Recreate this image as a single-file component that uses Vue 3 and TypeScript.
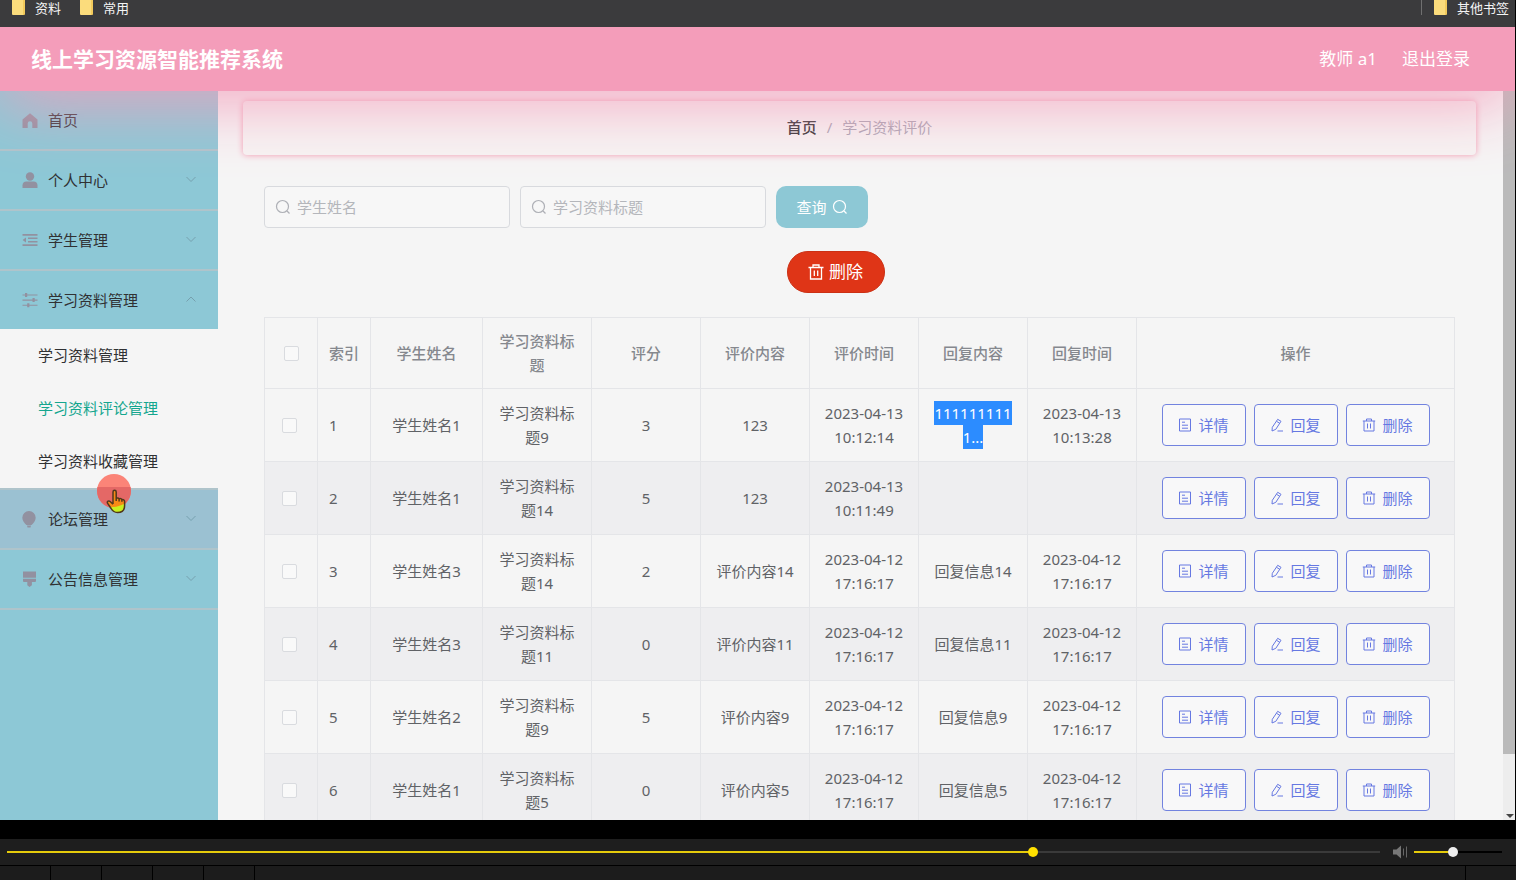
<script setup lang="ts">
import { ref } from 'vue'

interface Review {
  id: number
  student: string
  title: string
  score: number
  content: string
  time: string[]
  reply: string
  replyTime: string[]
  selected?: boolean
}

interface MenuItem {
  label: string
  icon: 'home' | 'user' | 'list' | 'sliders' | 'bulb' | 'brush'
  arrow?: 'down' | 'up'
  tinted?: boolean
  children?: string[]
}

const menu: MenuItem[] = [
  { label: '首页', icon: 'home' },
  { label: '个人中心', icon: 'user', arrow: 'down' },
  { label: '学生管理', icon: 'list', arrow: 'down' },
  {
    label: '学习资料管理',
    icon: 'sliders',
    arrow: 'up',
    children: ['学习资料管理', '学习资料评论管理', '学习资料收藏管理'],
  },
  { label: '论坛管理', icon: 'bulb', arrow: 'down', tinted: true },
  { label: '公告信息管理', icon: 'brush', arrow: 'down' },
]
const activeChild = '学习资料评论管理'

const headers = ['学生姓名', '学习资料标题', '评分', '评价内容', '评价时间', '回复内容', '回复时间', '操作']

const seeded = ['2023-04-12', '17:16:17']
const rows: Review[] = [
  { id: 1, student: '学生姓名1', title: '学习资料标题9', score: 3, content: '123', time: ['2023-04-13', '10:12:14'], reply: '1111111111...', replyTime: ['2023-04-13', '10:13:28'], selected: true },
  { id: 2, student: '学生姓名1', title: '学习资料标题14', score: 5, content: '123', time: ['2023-04-13', '10:11:49'], reply: '', replyTime: [] },
  { id: 3, student: '学生姓名3', title: '学习资料标题14', score: 2, content: '评价内容14', time: seeded, reply: '回复信息14', replyTime: seeded },
  { id: 4, student: '学生姓名3', title: '学习资料标题11', score: 0, content: '评价内容11', time: seeded, reply: '回复信息11', replyTime: seeded },
  { id: 5, student: '学生姓名2', title: '学习资料标题9', score: 5, content: '评价内容9', time: seeded, reply: '回复信息9', replyTime: seeded },
  { id: 6, student: '学生姓名1', title: '学习资料标题5', score: 0, content: '评价内容5', time: seeded, reply: '回复信息5', replyTime: seeded },
]

const studentName = ref('')
const materialTitle = ref('')
const progress = ref(749)
const volume = ref(44)
</script>

<template>
  <div class="screen">
    <nav class="bookmarks" aria-label="书签">
      <a href="#" class="bookmark"><span class="folder"></span>资料</a>
      <a href="#" class="bookmark"><span class="folder"></span>常用</a>
      <span class="divider"></span>
      <a href="#" class="bookmark"><span class="folder"></span>其他书签</a>
    </nav>

    <div class="site">
      <header class="topbar">
        <h1>线上学习资源智能推荐系统</h1>
        <span class="who">教师 a1</span>
        <a href="#" class="logout">退出登录</a>
      </header>

      <div class="body">
        <aside class="sidebar">
          <ul class="menu">
            <li v-for="item in menu" :key="item.label" class="menu-group">
              <button type="button" class="menu-item" :class="{ tinted: item.tinted }">
                <svg class="menu-icon" viewBox="0 0 16 16" aria-hidden="true">
                  <path v-if="item.icon === 'home'" d="M8 1.200 15.500 7.500V16H10.300V11.500a2.300 2.300 0 0 0-4.600 0V16H.5V7.500z" />
                  <template v-else-if="item.icon === 'user'">
                    <circle cx="8" cy="4.500" r="4.200" />
                    <path d="M.5 16v-2.500c0-2.500 1.600-3.900 3.800-3.900h7.400c2.200 0 3.800 1.400 3.800 3.900V16z" />
                  </template>
                  <template v-else-if="item.icon === 'list'">
                    <path d="M.5 2h15v1.700H.5zM6 5.400h9.500v1.500H6zM6 9h9.500v1.500H6zM.5 12.300h15V14H.5zM4 5.400v5L.6 7.900z" />
                  </template>
                  <template v-else-if="item.icon === 'sliders'">
                    <path d="M.5 2.500h15v1.100H.5zM.5 7.600h15v1.100H.5zM.5 12.700h15v1.100H.5z" />
                    <path d="M3 1h2.200v4H3zM10.500 6.100h2.200v4h-2.200zM5.200 11.200h2.200v4H5.200z" />
                  </template>
                  <path v-else-if="item.icon === 'bulb'" d="M7 0a6.700 6.700 0 0 1 6.700 6.700c0 3-2.100 5.300-4.100 7.200H4.400C2.400 12 .3 9.700.3 6.700A6.700 6.700 0 0 1 7 0zM5 14.600h4L8.500 16.500h-3z" />
                  <path v-else d="M1 .5h13v6.200H1zM1 7.700h13v2.100c0 .8-.5 1.200-1.200 1.200H9.900v3.200L7.500 16l-2.200-1.800V11H2.200C1.500 11 1 10.600 1 9.800z" />
                </svg>
                <span class="menu-label">{{ item.label }}</span>
                <svg v-if="item.arrow" class="arrow" viewBox="0 0 10 10" aria-hidden="true">
                  <path :d="item.arrow === 'down' ? 'M.5 2 5 6.500 9.500 2' : 'M.5 6.500 5 2 9.500 6.500'" />
                </svg>
              </button>
              <ul v-if="item.children" class="submenu">
                <li v-for="child in item.children" :key="child">
                  <a href="#" :class="{ active: child === activeChild }">{{ child }}</a>
                </li>
              </ul>
            </li>
          </ul>
          <div class="pointer">
            <svg viewBox="0 0 36 42" aria-hidden="true">
              <circle cx="18" cy="18" r="17" fill="#fb8478" />
              <path d="M1.500 14h33a17 17 0 0 1 .500 4 17 17 0 0 1-34 0 17 17 0 0 1 .5-4z" fill="#e46866" />
              <path d="M17 19c0-2.200 3.200-2.200 3.200 0v6.500c.8-1 2.600-.7 2.900.5.900-.8 2.500-.4 2.800.8 1.200-.6 2.700.2 2.700 1.700v4.300c0 4.200-2.800 6.700-7 6.700-3.200 0-5-1.400-6.500-4l-3.600-5.300c-.8-1.900 1.300-2.900 2.600-1.700l2.900 2.600z" fill="#f88a16" />
              <path d="M14 33.500c5 1.500 9-.5 14.500-2.800v2.100c0 4.200-2.800 6.700-7 6.700-3.200 0-5-1.400-6.500-4z" fill="#c8f020" />
              <path d="M17 31V19c0-2.200 3.200-2.200 3.200 0v9m0-2.500c.8-1 2.600-.7 2.900.5v2.500m0-2.500c.9-.8 2.500-.4 2.800.8v2m0-2c1.200-.6 2.700.2 2.700 1.700v4.300c0 4.200-2.800 6.700-7 6.700-3.200 0-5-1.400-6.500-4l-3.600-5.300c-.8-1.900 1.300-2.900 2.600-1.700l2.900 2.600" fill="none" stroke="#50381c" stroke-width="1.500" />
            </svg>
          </div>
        </aside>

        <main class="content">
          <nav class="crumbs" aria-label="面包屑">
            <a href="#">首页</a>
            <span class="slash">/</span>
            <span class="current">学习资料评价</span>
          </nav>

          <section class="panel">
            <form class="search" @submit.prevent>
              <label class="field">
                <svg class="lens" viewBox="0 0 16 16" aria-hidden="true"><circle cx="7.500" cy="7.500" r="6" /><path d="m12 12 2.500 2.500" /></svg>
                <input v-model="studentName" type="text" placeholder="学生姓名" aria-label="学生姓名" />
              </label>
              <label class="field">
                <svg class="lens" viewBox="0 0 16 16" aria-hidden="true"><circle cx="7.500" cy="7.500" r="6" /><path d="m12 12 2.500 2.500" /></svg>
                <input v-model="materialTitle" type="text" placeholder="学习资料标题" aria-label="学习资料标题" />
              </label>
              <button type="submit" class="query">
                查询
                <svg class="lens" viewBox="0 0 16 16" aria-hidden="true"><circle cx="7.500" cy="7.500" r="6" /><path d="m12 12 2.500 2.500" /></svg>
              </button>
            </form>

            <div class="bulk">
              <button type="button" class="remove">
                <svg viewBox="0 0 16 16" aria-hidden="true"><path d="M.5 3.500h15M5 3.500V1h6v2.500M2.500 3.500v11.500h11V3.500M6.300 6.500v5.500M9.700 6.500v5.500" /></svg>
                删除
              </button>
            </div>

            <table class="grid">
              <colgroup>
                <col class="c-check" />
                <col class="c-index" />
                <col class="c-name" />
                <col v-for="n in 6" :key="n" class="c-data" />
                <col class="c-actions" />
              </colgroup>
              <thead>
                <tr>
                  <th><input type="checkbox" aria-label="全选" /></th>
                  <th class="index">索引</th>
                  <th v-for="h in headers" :key="h">{{ h }}</th>
                </tr>
              </thead>
              <tbody>
                <tr v-for="row in rows" :key="row.id">
                  <td class="check"><input type="checkbox" :aria-label="`选择第${row.id}行`" /></td>
                  <td class="index">{{ row.id }}</td>
                  <td>{{ row.student }}</td>
                  <td>{{ row.title }}</td>
                  <td>{{ row.score }}</td>
                  <td>{{ row.content }}</td>
                  <td class="time"><div v-for="part in row.time" :key="part">{{ part }}</div></td>
                  <td><span :class="{ selected: row.selected }">{{ row.reply }}</span></td>
                  <td class="time"><div v-for="part in row.replyTime" :key="part">{{ part }}</div></td>
                  <td class="ops">
                    <div class="actions">
                      <button type="button">
                        <svg viewBox="0 0 14 14" aria-hidden="true"><path d="M1.500 1h11v12h-11zM4 4.200h3M4 7.200h6M4 10.200h6" /></svg>详情
                      </button>
                      <button type="button">
                        <svg viewBox="0 0 14 14" aria-hidden="true"><path d="M7.700 1.300 11 3.300 5.800 11.300 2 13l.3-3.700zM6.500 3.300l3.200 2M7.500 13H13" /></svg>回复
                      </button>
                      <button type="button">
                        <svg viewBox="0 0 14 14" aria-hidden="true"><path d="M.8 3h12.400M4.500 3V1h5v2M2 3v10h10V3M5.500 5.500v5M8.500 5.500v5" /></svg>删除
                      </button>
                    </div>
                  </td>
                </tr>
              </tbody>
            </table>
          </section>
        </main>

        <div class="scrollbar" aria-hidden="true">
          <div class="thumb"></div>
          <div class="down"></div>
        </div>
      </div>
    </div>

    <footer class="player">
      <input v-model.number="progress" class="seek" type="range" min="0" max="1000" aria-label="播放进度" :style="{ '--fill': progress / 10 + '%' }" />
      <button type="button" class="mute" aria-label="静音">
        <svg viewBox="0 0 16 14" aria-hidden="true">
          <path d="M1 4.500h3.500L9 .5v13L4.500 9.500H1z" fill="#777" />
          <path d="M11.500 3.500v7M14.500 1.500v11" stroke="#666" fill="none" />
        </svg>
      </button>
      <input v-model.number="volume" class="volume" type="range" min="0" max="100" aria-label="音量" :style="{ '--fill': volume + '%' }" />
    </footer>
    <div class="tray">
      <span v-for="n in 5" :key="n" class="slot"></span>
      <span class="slot wide"></span>
      <span class="slot"></span>
    </div>
  </div>
</template>

<style>
body {
  background: #000;
  overflow: hidden;
}
</style>

<style scoped>
* {
  box-sizing: border-box;
}
.screen {
  display: flex;
  flex-direction: column;
  height: 100vh;
  background: #000;
  color: #606266;
  font: 15px/24px 'Noto Sans', 'Noto Sans CJK SC', sans-serif;
}
button,
input {
  font: inherit;
  color: inherit;
}
button {
  cursor: pointer;
}
a {
  color: inherit;
  text-decoration: none;
}
svg {
  display: block;
  flex: none;
}
ul {
  list-style: none;
  margin: 0;
  padding: 0;
}

/* bookmarks bar */
.bookmarks {
  display: flex;
  align-items: center;
  flex: none;
  height: 27px;
  margin-right: 1px;
  padding: 0 6px 12px 12px;
  background: #3b3b3d;
  color: #f4f4f4;
  font-size: 13px;
  line-height: 16px;
}
.bookmark {
  display: flex;
  align-items: center;
  gap: 10px;
  margin-right: 19px;
}
.bookmark:last-child {
  margin-right: 0;
}
.folder {
  width: 13px;
  height: 15px;
  background: #fbdc7c;
  border-radius: 0 0 1px 1px;
  border-right: 2px solid #f2ca5c;
}
.divider {
  width: 1px;
  height: 15px;
  margin: 0 12px 0 auto;
  background: #707070;
}

/* site shell */
.site {
  display: flex;
  flex-direction: column;
  flex: 1;
  min-height: 0;
  margin-right: 1px;
  overflow: hidden;
  background: #f5f5f5;
}
.topbar {
  position: relative;
  z-index: 2;
  display: flex;
  align-items: center;
  gap: 25px;
  flex: none;
  height: 64px;
  padding: 0 45px 0 31px;
  background: #f49dba;
  box-shadow: 0 8px 70px #f49dba;
  color: #fff;
  font-size: 17px;
}
.topbar h1 {
  margin: 0 auto 0 0;
  font-size: 21px;
  font-weight: 700;
}
.body {
  display: flex;
  flex: 1;
  min-height: 0;
}

/* sidebar */
.sidebar {
  position: relative;
  flex: none;
  width: 218px;
  background: #8dc8d6;
  color: #303133;
}
.menu-group {
  border-bottom: 2px solid #afc4cb;
}
.menu-item {
  display: flex;
  align-items: center;
  width: 100%;
  height: 58px;
  padding: 0 22px;
  border: 0;
  background: none;
  text-align: left;
}
.menu-item.tinted {
  background: #9bc1d2;
}
.menu-icon {
  width: 16px;
  height: 16px;
  margin-right: 10px;
  fill: #9291a0;
  overflow: visible;
}
.menu-label {
  flex: 1;
}
.arrow {
  width: 10px;
  height: 10px;
  fill: none;
  stroke: #76a0ae;
}
.submenu {
  background: #f5f5f5;
}
.submenu a {
  display: block;
  padding: 0 38px;
  line-height: 53px;
}
.submenu a.active {
  color: #14a68e;
}
.pointer {
  position: absolute;
  left: 96px;
  top: 382px;
  width: 36px;
  height: 42px;
  pointer-events: none;
}

/* main column */
.content {
  flex: 1;
  min-width: 0;
  padding: 10px 27px 0 25px;
  overflow: hidden;
}
.crumbs {
  display: flex;
  justify-content: center;
  align-items: center;
  gap: 10px;
  height: 54px;
  padding-bottom: 2px;
  border-radius: 4px;
  background: #f6f5f4;
  box-shadow: 0 0 6px #f39ab0;
  color: #aaa7b4;
}
.crumbs a {
  color: #303133;
  font-weight: 500;
}
.panel {
  padding: 31px 23px 0 21px;
}
.search {
  display: flex;
  gap: 10px;
}
.field {
  display: flex;
  align-items: center;
  gap: 6px;
  width: 246px;
  height: 42px;
  padding: 0 10px;
  border: 1px solid #d8dade;
  border-radius: 4px;
  background: #f7f7f7;
  color: #aeb0b6;
}
.field input {
  flex: 1;
  min-width: 0;
  padding: 0;
  border: 0;
  outline: 0;
  background: none;
  color: #606266;
}
.field input::placeholder {
  color: #b4b6bb;
  opacity: 1;
}
.lens {
  width: 16px;
  height: 16px;
  fill: none;
  stroke: currentColor;
  stroke-width: 1.200;
}
.query {
  display: flex;
  justify-content: center;
  align-items: center;
  gap: 5px;
  width: 92px;
  height: 42px;
  padding: 0;
  border: 0;
  border-radius: 10px;
  background: #8dc8d5;
  color: #fff;
}
.bulk {
  display: flex;
  justify-content: center;
  padding: 23px 46px 24px 0;
}
.remove {
  display: flex;
  justify-content: center;
  align-items: center;
  gap: 5px;
  width: 98px;
  height: 42px;
  padding: 0;
  border: 1px solid #cb3014;
  border-radius: 21px;
  background: #df3517;
  color: #fff;
  font-size: 17px;
}
.remove svg {
  width: 16px;
  height: 16px;
  fill: none;
  stroke: #fff;
  stroke-width: 1.300;
}

/* review table */
.grid {
  width: 100%;
  table-layout: fixed;
  border-collapse: collapse;
  text-align: center;
}
.c-check {
  width: 53px;
}
.c-index {
  width: 53px;
}
.c-name {
  width: 112px;
}
.c-data {
  width: 109px;
}
.c-actions {
  width: 318px;
}
.grid th,
.grid td {
  padding: 12px 15px;
  border: 1px solid #e4e5e8;
  overflow-wrap: anywhere;
}
.grid th {
  padding: 11px 15px;
  color: #85888e;
  font-weight: 500;
}
.grid .index {
  padding-left: 11px;
  padding-right: 11px;
  text-align: left;
}
.grid .time {
  padding-left: 0;
  padding-right: 0;
  white-space: nowrap;
}
.grid .check {
  padding-right: 19px;
}
.grid tbody tr {
  height: 73px;
}
.grid tbody tr:nth-child(even) {
  background: #eeeef0;
}
.grid input {
  display: block;
  appearance: none;
  width: 15px;
  height: 15px;
  margin: 0 auto;
  border: 1px solid #d9dbdf;
  border-radius: 2px;
  background: #f9f9f9;
}
.selected {
  padding: 2px 0;
  background: #2c8cff;
  color: #fff;
}
.grid .ops {
  padding: 0;
}
.actions {
  display: flex;
  justify-content: center;
  gap: 8px;
}
.actions button {
  display: flex;
  justify-content: center;
  align-items: center;
  gap: 6px;
  width: 84px;
  height: 42px;
  padding: 0;
  border: 1px solid #7283df;
  border-radius: 4px;
  background: #f8f8f9;
  color: #6678e2;
}
.actions svg {
  width: 14px;
  height: 14px;
  fill: none;
  stroke: currentColor;
}

/* page scrollbar */
.scrollbar {
  display: flex;
  flex-direction: column;
  justify-content: space-between;
  align-items: flex-end;
  flex: none;
  width: 12px;
  background: #ededed;
}
.thumb {
  width: 100%;
  height: 91%;
  background: #bababa;
}
.down {
  margin: 0 1px 2px 0;
  border: 4px solid transparent;
  border-top-color: #444;
  border-bottom: 0;
}

/* video controls */
.player {
  display: flex;
  align-items: center;
  flex: none;
  height: 26px;
  margin-top: 19px;
  padding: 0 14px 0 7px;
  background: #1e1e1e;
}
.player input {
  appearance: none;
  height: 10px;
  margin: 0;
  background: linear-gradient(#e5cb0b, #e5cb0b) 0 4px / var(--fill) 2px no-repeat,
    linear-gradient(var(--rail), var(--rail)) 0 4px / 100% 2px no-repeat;
}
.player input::-webkit-slider-thumb {
  appearance: none;
  width: 10px;
  height: 10px;
  border-radius: 50%;
  background: var(--knob);
}
.seek {
  --rail: #3a3a3a;
  --knob: #ffe000;
  flex: 1;
  min-width: 0;
}
.volume {
  --rail: #000;
  --knob: #eee;
  width: 88px;
}
.mute {
  margin: 0 6px 0 12px;
  padding: 0;
  border: 0;
  background: none;
}
.mute svg {
  width: 16px;
  height: 14px;
}
.tray {
  display: flex;
  gap: 1px;
  flex: none;
  height: 14px;
  margin-top: 1px;
}
.slot {
  width: 50px;
  background: #1c1c1c;
}
.slot.wide {
  flex: 1;
}
</style>
